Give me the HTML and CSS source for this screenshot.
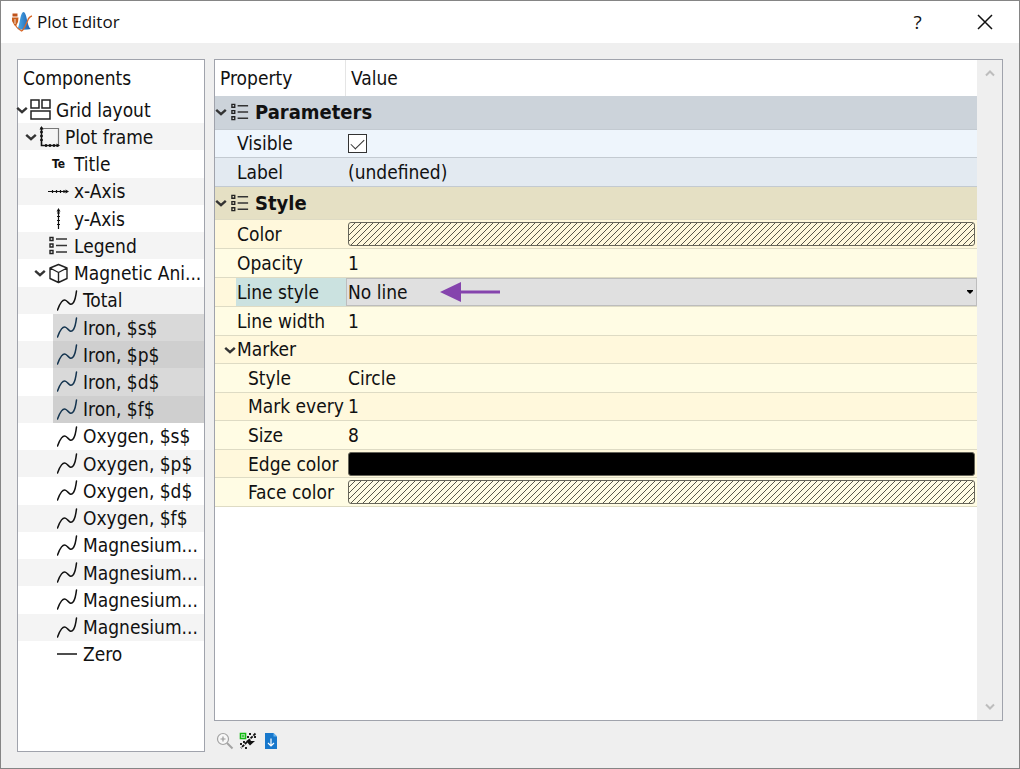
FILE: index.html
```html
<!DOCTYPE html>
<html lang="en">
<head>
  <meta charset="UTF-8">
  <meta name="viewport" content="width=device-width, initial-scale=1.0">
  <title>Plot Editor</title>
  <link rel="stylesheet" href="styles.css">
</head>
<body>
  <!-- shared icons -->
  <svg class="sprites" aria-hidden="true">
    <symbol id="chevron" viewBox="0 0 12 12">
      <path d="M1.2 3.8 L6 8.2 L10.8 3.8" fill="none" stroke="#333" stroke-width="2.4"/>
    </symbol>
    <symbol id="grid" viewBox="0 0 21 21">
      <path d="M1 1h8v8H1zM12 1h8v8h-8zM1 12h19v8H1z" fill="none" stroke="#222" stroke-width="1.5"/>
    </symbol>
    <symbol id="frame" viewBox="0 0 21 21">
      <path d="M2 2.500h17.500v17" fill="none" stroke="#777" stroke-width="1.2"/>
      <path d="M2.500 1v18.500H20M1 6h3M1 10h3M1 14h3M7 18v3M11 18v3M15 18v3" fill="none" stroke="#111" stroke-width="1.6"/>
      <path d="M2.500 0l2 3.500h-4zM21 19.500l-3.500-2v4z" fill="#111"/>
    </symbol>
    <symbol id="xaxis" viewBox="0 0 21 21">
      <path d="M0 10.500h19M4.500 9v3M8.500 9v3M12.500 9v3M16 9v3" fill="none" stroke="#111" stroke-width="1.2"/>
      <path d="M21 10.500l-3.500-2v4z" fill="#111"/>
    </symbol>
    <symbol id="yaxis" viewBox="0 0 21 21">
      <path d="M10.500 21V2M9 16.500h3M9 12.500h3M9 8.500h3M9 5h3" fill="none" stroke="#111" stroke-width="1.2"/>
      <path d="M10.500 0l-2 3.500h4z" fill="#111"/>
    </symbol>
    <symbol id="legend" viewBox="0 0 21 21">
      <path d="M2 2.500h3v3H2zM2 9h3v3H2zM2 15.500h3v3H2z" fill="none" stroke="#222" stroke-width="1.4"/>
      <path d="M8 4h11M8 10.500h11M8 17h11" fill="none" stroke="#333" stroke-width="1.5"/>
    </symbol>
    <symbol id="cube" viewBox="0 0 21 21">
      <path d="M10.500 1.500l8.500 3.500v10.500l-8.500 4-8.500-4V5zM2 5l8.500 4.500L19 5M10.500 9.500v10" fill="none" stroke="#222" stroke-width="1.4" stroke-linejoin="round"/>
    </symbol>
    <symbol id="curve" viewBox="0 0 21 21">
      <path d="M0.500 20C3 13 6 8.500 9 10.500C12 12.500 13.500 16.500 16.500 12.500C18.500 9.500 19 5 19.500 1" fill="none" stroke="currentColor" stroke-width="1.5" stroke-linecap="round"/>
    </symbol>
    <symbol id="line" viewBox="0 0 21 21">
      <path d="M0 10h20" fill="none" stroke="#222" stroke-width="1.6"/>
    </symbol>
  </svg>

  <div class="window">
    <header class="titlebar">
      <svg class="logo" viewBox="0 0 22 22" aria-hidden="true">
        <defs>
          <linearGradient id="peak" x1="0" x2="1">
            <stop offset="0" stop-color="#4fb0ee"/>
            <stop offset="1" stop-color="#1757a8"/>
          </linearGradient>
        </defs>
        <path d="M6 18C9 16 9 1 12.500 1S16 16 20 18C15 19 10 19 6 18z" fill="url(#peak)"/>
        <path d="M1.500 2.500h5v3h-5z" fill="#c0531a"/>
        <path d="M1 6.500h6.500L7 11l-2 4-1.500-0.500L1 10z" fill="#c9601f"/>
        <path d="M4 8v5" stroke="#fff" stroke-width="0.800"/>
        <path d="M4.500 14C5 17 8 18 10.500 20C13 19 14.500 14 16.500 10C17.500 7 19 5.500 21 5" fill="none" stroke="#d9692a" stroke-width="1.300"/>
      </svg>
      <h1>Plot Editor</h1>
      <button class="title-button" type="button">?</button>
      <button class="title-button" type="button" aria-label="Close">
        <svg class="close" viewBox="0 0 16 16"><path d="M1 1l14 14M15 1L1 15" stroke="#111" stroke-width="1.5"/></svg>
      </button>
    </header>

    <main class="content">
      <section class="panel components">
        <h2>Components</h2>
        <ul class="tree">
          <li><span class="branch"><svg><use href="#chevron"/></svg></span><a href="#"><svg><use href="#grid"/></svg>Grid layout</a></li>
          <li class="level-1"><span class="branch"><svg><use href="#chevron"/></svg></span><a href="#"><svg><use href="#frame"/></svg>Plot frame</a></li>
          <li class="level-2"><span class="branch"></span><a href="#"><span class="te">Te</span>Title</a></li>
          <li class="level-2"><span class="branch"></span><a href="#"><svg><use href="#xaxis"/></svg>x-Axis</a></li>
          <li class="level-2"><span class="branch"></span><a href="#"><svg><use href="#yaxis"/></svg>y-Axis</a></li>
          <li class="level-2"><span class="branch"></span><a href="#"><svg><use href="#legend"/></svg>Legend</a></li>
          <li class="level-2"><span class="branch"><svg><use href="#chevron"/></svg></span><a href="#"><svg><use href="#cube"/></svg>Magnetic Ani...</a></li>
          <li class="level-3"><span class="branch"></span><a href="#"><svg><use href="#curve"/></svg>Total</a></li>
          <li class="level-3 selected"><span class="branch"></span><a href="#"><svg><use href="#curve"/></svg>Iron, $s$</a></li>
          <li class="level-3 selected"><span class="branch"></span><a href="#"><svg><use href="#curve"/></svg>Iron, $p$</a></li>
          <li class="level-3 selected"><span class="branch"></span><a href="#"><svg><use href="#curve"/></svg>Iron, $d$</a></li>
          <li class="level-3 selected"><span class="branch"></span><a href="#"><svg><use href="#curve"/></svg>Iron, $f$</a></li>
          <li class="level-3"><span class="branch"></span><a href="#"><svg><use href="#curve"/></svg>Oxygen, $s$</a></li>
          <li class="level-3"><span class="branch"></span><a href="#"><svg><use href="#curve"/></svg>Oxygen, $p$</a></li>
          <li class="level-3"><span class="branch"></span><a href="#"><svg><use href="#curve"/></svg>Oxygen, $d$</a></li>
          <li class="level-3"><span class="branch"></span><a href="#"><svg><use href="#curve"/></svg>Oxygen, $f$</a></li>
          <li class="level-3"><span class="branch"></span><a href="#"><svg><use href="#curve"/></svg>Magnesium...</a></li>
          <li class="level-3"><span class="branch"></span><a href="#"><svg><use href="#curve"/></svg>Magnesium...</a></li>
          <li class="level-3"><span class="branch"></span><a href="#"><svg><use href="#curve"/></svg>Magnesium...</a></li>
          <li class="level-3"><span class="branch"></span><a href="#"><svg><use href="#curve"/></svg>Magnesium...</a></li>
          <li class="level-3"><span class="branch"></span><a href="#"><svg><use href="#line"/></svg>Zero</a></li>
        </ul>
      </section>

      <div class="editor">
        <section class="panel properties">
          <table>
            <thead>
              <tr><th class="name" scope="col">Property</th><th scope="col">Value</th></tr>
            </thead>
            <tbody class="parameters">
              <tr class="group">
                <th colspan="2"><div class="group-title"><svg class="arrow"><use href="#chevron"/></svg><svg class="list"><use href="#legend"/></svg>Parameters</div></th>
              </tr>
              <tr><th scope="row"><label for="visible">Visible</label></th><td><input id="visible" type="checkbox" checked></td></tr>
              <tr><th scope="row">Label</th><td>(undefined)</td></tr>
            </tbody>
            <tbody class="style">
              <tr class="group">
                <th colspan="2"><div class="group-title"><svg class="arrow"><use href="#chevron"/></svg><svg class="list"><use href="#legend"/></svg>Style</div></th>
              </tr>
              <tr>
                <th scope="row">Color</th>
                <td><button class="swatch" type="button" aria-label="Color">
                  <svg width="100%" height="100%">
                    <defs>
                      <pattern id="hatch" width="6" height="6" patternUnits="userSpaceOnUse">
                        <path d="M-1 7L7 -1M-1 1L1 -1M5 7L7 5" stroke="#45443a" stroke-width="0.900"/>
                      </pattern>
                    </defs>
                    <rect width="100%" height="100%" fill="url(#hatch)"/>
                  </svg>
                </button></td>
              </tr>
              <tr><th scope="row">Opacity</th><td>1</td></tr>
              <tr class="active">
                <th scope="row"><label for="line-style">Line style</label></th>
                <td>
                  <div class="combo">
                    <select id="line-style"><option>No line</option><option>Solid</option><option>Dashed</option></select>
                    <svg class="drop" viewBox="0 0 6 4"><path d="M0 0h6v1L3 4 0 1z"/></svg>
                    <svg class="pointer" viewBox="0 0 60 20"><path d="M0 10L21 0v8.500h39v3H21V20z" fill="#8544ad"/></svg>
                  </div>
                </td>
              </tr>
              <tr><th scope="row">Line width</th><td>1</td></tr>
              <tr><th class="parent" scope="row"><svg class="arrow"><use href="#chevron"/></svg>Marker</th><td></td></tr>
              <tr><th class="child" scope="row">Style</th><td>Circle</td></tr>
              <tr><th class="child" scope="row">Mark every</th><td>1</td></tr>
              <tr><th class="child" scope="row">Size</th><td>8</td></tr>
              <tr><th class="child" scope="row">Edge color</th><td><button class="swatch black" type="button" aria-label="Edge color"></button></td></tr>
              <tr>
                <th class="child" scope="row">Face color</th>
                <td><button class="swatch" type="button" aria-label="Face color">
                  <svg width="100%" height="100%"><rect width="100%" height="100%" fill="url(#hatch)"/></svg>
                </button></td>
              </tr>
            </tbody>
          </table>
          <div class="scrollbar">
            <button type="button" aria-label="Scroll up"><svg viewBox="0 0 10 8"><path d="M1 6.500L5 2.500 9 6.500" fill="none" stroke="#bdbdbd" stroke-width="2"/></svg></button>
            <button type="button" aria-label="Scroll down"><svg viewBox="0 0 10 8"><path d="M1 1.500L5 5.500 9 1.500" fill="none" stroke="#bdbdbd" stroke-width="2"/></svg></button>
          </div>
        </section>

        <div class="toolbar">
          <button type="button" aria-label="Zoom">
            <svg viewBox="0 0 18 18">
              <circle cx="7" cy="7" r="5.500" fill="#f7f7f7" stroke="#a3a3a3" stroke-width="1.200"/>
              <path d="M7 4.500v5M4.500 7h5" stroke="#999" stroke-width="1.200"/>
              <path d="M11 11l5.500 5.500" stroke="#a3a3a3" stroke-width="2"/>
            </svg>
          </button>
          <button type="button" aria-label="Add curve">
            <svg viewBox="0 0 18 18">
              <path d="M1.500 1.500h5v5h-5z" fill="#fff" stroke="#12b812" stroke-width="1.600"/>
              <path d="M4 2.500v3M2.500 4h3" stroke="#12b812"/>
              <path d="M16.500 1.500L2 16" stroke="#111" stroke-width="1.800" stroke-dasharray="3 1"/>
              <path d="M7 9l4-1.500 1 1.500h4l-5 4.500z" fill="#111"/>
              <path d="M8 4h2v2H8zM10 1h2v2h-2zM15 4h2v2h-2zM1 11h2v2H1zM4 9h2v2H4zM6 15h2v2H6z" fill="#222"/>
            </svg>
          </button>
          <button type="button" aria-label="Export">
            <svg viewBox="0 0 18 18">
              <path d="M3 1h8.500L15 4.500V17H3z" fill="#1878cc"/>
              <path d="M11.500 1L15 4.500h-3.500z" fill="#66b5ef"/>
              <path d="M9 6.500v7M6 11l3 3 3-3" fill="none" stroke="#fff" stroke-width="1.200"/>
            </svg>
          </button>
        </div>
      </div>
    </main>
  </div>
</body>
</html>
```
FILE: styles.css
```css
* {
    box-sizing: border-box;
}
body {
    margin: 0;
    font-family: Tahoma, "DejaVu Sans Condensed", "Noto Sans", sans-serif;
    font-size: 19px;
    line-height: 24px;
    color: #111;
}
button {
    padding: 0;
    border: none;
    background: none;
    font: inherit;
    color: inherit;
}
svg {
    display: block;
    flex-shrink: 0;
}
.sprites {
    display: none;
}
.window {
    display: flex;
    flex-direction: column;
    min-height: 100vh;
    border: 1px solid #858585;
    background-color: #efefef;
}

/* title bar */
.titlebar {
    display: flex;
    align-items: center;
    height: 42px;
    padding: 0 1px 0 10px;
    background-color: #fff;
    font-family: "Open Sans", "Noto Sans", sans-serif;
}
.logo {
    width: 22px;
    height: 22px;
}
.titlebar h1 {
    flex: 1;
    margin: 0 0 0 4px;
    font-size: 17px;
    font-weight: normal;
}
.title-button {
    display: flex;
    align-items: center;
    justify-content: center;
    width: 67px;
    height: 42px;
}
.close {
    width: 16px;
    height: 16px;
}

/* two panes */
.content {
    flex: 1;
    display: flex;
    gap: 9px;
    padding: 16px;
}
.panel {
    border: 1px solid #a0a3ac;
    background-color: #fff;
}
.components {
    width: 188px;
}
.components h2 {
    margin: 0;
    padding: 6px 5px;
    font-size: 19px;
    font-weight: normal;
}
.tree {
    display: grid;
    grid-template-columns: minmax(0, 1fr);
    grid-auto-rows: 1fr;
    height: 572px;
    margin: 0;
    padding: 0;
    list-style: none;
}
.tree li {
    display: flex;
    min-height: 0;
}
.tree li:nth-child(even) {
    background-color: #f4f4f4;
}
.level-1 {
    padding-left: 9px;
}
.level-2 {
    padding-left: 18px;
}
.level-3 {
    padding-left: 27px;
}
.branch {
    display: flex;
    align-items: center;
    justify-content: center;
    width: 8px;
}
.branch svg,
.arrow {
    width: 12px;
    height: 12px;
}
.tree a {
    flex: 1;
    display: flex;
    align-items: center;
    gap: 5px;
    min-width: 0;
    padding-left: 4px;
    white-space: nowrap;
    color: inherit;
    text-decoration: none;
}
.tree a svg {
    width: 21px;
    height: 21px;
}
.te {
    width: 21px;
    font-size: 12px;
    font-weight: bold;
    text-align: center;
}
.selected a {
    background-color: #d9d9d9;
}
.selected:nth-child(even) a {
    background-color: #cfcfcf;
}
.selected svg {
    color: #14344f;
}

/* property editor */
.editor {
    flex: 1;
    display: flex;
    flex-direction: column;
    min-width: 0;
}
.properties {
    flex: 1;
    display: flex;
    align-items: flex-start;
}
table {
    flex: 1;
    width: 100%;
    height: 447px;
    table-layout: fixed;
    border-collapse: separate;
    border-spacing: 0;
}
th,
td {
    height: 28px;
    padding: 0 2px;
    text-align: left;
    font-weight: normal;
    line-height: 22px;
    white-space: nowrap;
}
thead th {
    height: 36px;
    padding-left: 5px;
}
thead .name {
    width: 131px;
    border-right: 1px solid #e5e5e5;
}
tbody th {
    padding: 0 0 0 22px;
}
tbody .child {
    padding-left: 33px;
}
tbody .parent {
    padding-left: 9px;
}
.parent .arrow {
    display: inline-block;
    margin-right: 1px;
}
tbody th,
tbody td {
    border-bottom: 1px solid #dedbc4;
}
.parameters th,
.parameters td {
    border-color: #c3cad1;
}
.parameters tr {
    background-color: #eef5fc;
}
.parameters tr:last-child {
    background-color: #e3eaf1;
}
.style tr {
    background-color: #fffce4;
}
.style tr:nth-child(even) {
    background-color: #fff8dc;
}
.group th {
    height: 33px;
    padding: 0;
    font-size: 20px;
    font-weight: bold;
}
.parameters .group {
    background-color: #ccd3da;
}
.style .group {
    background-color: #e5e0c4;
}
.group-title {
    display: flex;
    align-items: center;
}
.list {
    width: 20px;
    height: 20px;
    margin: 0 5px 0 3px;
}
input[type="checkbox"] {
    display: block;
    appearance: none;
    width: 19px;
    height: 19px;
    margin: 0;
    border: 1px solid #333;
    background-color: #fff;
}
input[type="checkbox"]:checked::before {
    content: "";
    display: block;
    width: 12px;
    height: 6px;
    margin: 4px 2px;
    border-left: 1px solid #333;
    border-bottom: 1px solid #333;
    transform: rotate(-45deg);
}
.swatch {
    display: block;
    width: 100%;
    height: 24px;
    border: 1px solid #66655a;
    border-radius: 3px;
    overflow: hidden;
}
.black {
    background-color: #000;
}
.active th {
    background: linear-gradient(#cbe2e0, #cbe2e0) 21px 0 no-repeat;
}
.active td {
    padding: 0;
}
.combo {
    position: relative;
    display: flex;
    align-items: center;
    height: 28px;
    border: 1px solid #bdbdbd;
    background-color: #e0e0e0;
}
.combo select {
    flex: 1;
    appearance: none;
    height: 26px;
    padding: 0 1px;
    border: none;
    background: none;
    font: inherit;
    color: inherit;
}
.drop {
    width: 6px;
    height: 4px;
    margin-right: 3px;
}
/* callout arrow over the drop-down */
.pointer {
    position: absolute;
    left: 93px;
    top: 3px;
    width: 60px;
    height: 20px;
}
.scrollbar {
    flex-shrink: 0;
    align-self: stretch;
    display: flex;
    flex-direction: column;
    justify-content: space-between;
    width: 25px;
    background-color: #efefef;
}
.scrollbar button {
    display: flex;
    align-items: center;
    justify-content: center;
    height: 26px;
}
.scrollbar svg {
    width: 10px;
    height: 8px;
}
.toolbar {
    display: flex;
    gap: 5px;
    padding: 11px 2px 2px;
}
.toolbar svg {
    width: 18px;
    height: 18px;
}
```
